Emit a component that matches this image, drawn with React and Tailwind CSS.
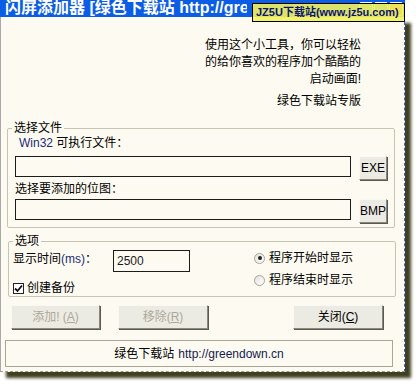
import { useState } from "react";

const Btn = ({ children, disabled, className = "" }) => (
  <button
    className={
      "h-[24px] bg-[#ecebe3] border border-t-[#f8f8f4] border-l-[#f8f8f4] border-r-[#8a887c] border-b-[#8a887c] shadow-[1px_1px_0_#5c5a50] text-[12px] leading-none flex items-center justify-center " +
      (disabled ? "text-[#aca899] " : "text-black ") +
      className
    }
  >
    {children}
  </button>
);

const Radio = ({ checked, label }) => (
  <div className="flex items-center h-[16px]">
    <span className="w-[11px] h-[11px] rounded-full border border-[#a5a39a] bg-gradient-to-br from-[#e4e2d8] to-white flex items-center justify-center">
      {checked && <span className="w-[4px] h-[4px] rounded-full bg-[#222]" />}
    </span>
    <span className="ml-[4px]">{label}</span>
  </div>
);

export default function App() {
  const [time, setTime] = useState("2500");
  const [backup, setBackup] = useState(true);

  return (
    <div className="w-[418px] h-[386px] bg-white overflow-hidden font-['Liberation_Sans','Noto_Sans_CJK_SC',sans-serif] text-[12px] text-black">
      <div className="w-[405px] relative">
        {/* title bar */}
        <div className="h-[17px] bg-[#0b5de6] flex items-center overflow-hidden">
          <span className="w-[247px] overflow-hidden whitespace-nowrap text-white font-bold text-[16px] leading-[17px] pl-[5px] -mt-[2px]">
            闪屏添加器 [绿色下载站 http://greendown.cn]
          </span>
          <div className="ml-auto flex gap-[1px] pr-[2px]">
            <span className="w-[14px] h-[14px] rounded-[2px] border border-white bg-[#3b80f0]" />
            <span className="w-[14px] h-[14px] rounded-[2px] border border-white bg-[#3b80f0]" />
            <span className="w-[14px] h-[14px] rounded-[2px] border border-white bg-[#e0542c]" />
          </div>
        </div>

        {/* watermark over the title */}
        <div className="absolute left-[252px] top-[3px] w-[153px] h-[19px] border border-black bg-[#f2f25c]/90 flex items-center pl-[3px] whitespace-nowrap font-bold text-[11px] text-[#0c1470]">
          JZ5U下载站(www.jz5u.com)
        </div>

        {/* body */}
        <div className="h-[355px] bg-[#fdfbf1] border-r border-b border-dashed border-r-[#2f62dc] border-b-[#9c9c94] shadow-[inset_1px_0_0_#a9a9a9,6px_6px_3px_rgba(48,48,14,0.92)] flex flex-col">
          <div className="pt-[20px] pr-[43px] text-right leading-[17px]">
            <p>使用这个小工具，你可以轻松</p>
            <p>的给你喜欢的程序加个酷酷的</p>
            <p>启动画面!</p>
            <p className="mt-[5px]">绿色下载站专版</p>
          </div>

          <fieldset className="mt-[11px] ml-[7px] w-[388px] border border-[#c7c3b2] rounded-[2px] pb-[4px]">
            <legend className="ml-[4px] px-[2px] leading-[14px]">选择文件</legend>
            <p className="pl-[11px] leading-[16px]">
              <span className="text-[#1b2a78]">Win32</span> 可执行文件：
            </p>
            <div className="mt-[5px] pl-[7px] flex items-start">
              <input className="w-[336px] h-[21px] border border-[#1c1c1c] bg-[#fdfbf1] outline-none" />
              <Btn className="ml-[8px] w-[28px] h-[20px]">EXE</Btn>
            </div>
            <p className="mt-[1px] pl-[7px] leading-[16px]">选择要添加的位图：</p>
            <div className="mt-[2px] pl-[7px] flex items-start">
              <input className="w-[336px] h-[21px] border border-[#1c1c1c] bg-[#fdfbf1] outline-none" />
              <Btn className="ml-[8px] w-[28px] h-[20px]">BMP</Btn>
            </div>
          </fieldset>

          <fieldset className="mt-[6px] ml-[8px] w-[388px] border border-[#c7c3b2] rounded-[2px]">
            <legend className="ml-[4px] px-[2px] leading-[14px]">选项</legend>
            <div className="flex">
              <div className="w-[245px] pl-[4px]">
                <div className="mt-[2px] flex items-start">
                  <span className="w-[100px] mt-[1px] leading-[16px]">
                    显示时间<span className="text-[#1b2a78]">(ms)</span>：
                  </span>
                  <input
                    value={time}
                    onChange={(e) => setTime(e.target.value)}
                    className="w-[77px] h-[22px] border border-[#1c1c1c] bg-[#fdfbf1] pl-[3px] text-[12px] text-[#1a1a1a] outline-none"
                  />
                </div>
                <label className="mt-[8px] flex items-center h-[16px]" onClick={() => setBackup(!backup)}>
                  <span className="w-[11px] h-[11px] border border-[#222] bg-white flex items-center justify-center">
                    {backup && (
                      <svg width="9" height="9" viewBox="0 0 9 9">
                        <path d="M1 4.5 L3.5 7 L8 1.5" stroke="#111" strokeWidth="1.8" fill="none" />
                      </svg>
                    )}
                  </span>
                  <span className="ml-[3px]">创建备份</span>
                </label>
              </div>
              <div className="pt-[2px] flex flex-col gap-[6px]">
                <Radio checked label="程序开始时显示" />
                <Radio label="程序结束时显示" />
              </div>
            </div>
          </fieldset>

          <div className="mt-[8px] flex pl-[11px]">
            <Btn disabled className="w-[89px]">
              添加! (<span className="underline">A</span>)
            </Btn>
            <Btn disabled className="ml-[18px] w-[90px]">
              移除(<span className="underline">R</span>)
            </Btn>
            <Btn className="ml-[85px] w-[90px]">
              关闭(<span className="underline">C</span>)
            </Btn>
          </div>

          <div className="mt-[11px] ml-[5px] w-[388px] h-[27px] border border-[#aaa696] flex items-center justify-center">
            绿色下载站 <span className="ml-[4px] text-[#14204f]">http://greendown.cn</span>
          </div>
        </div>
      </div>
    </div>
  );
}
